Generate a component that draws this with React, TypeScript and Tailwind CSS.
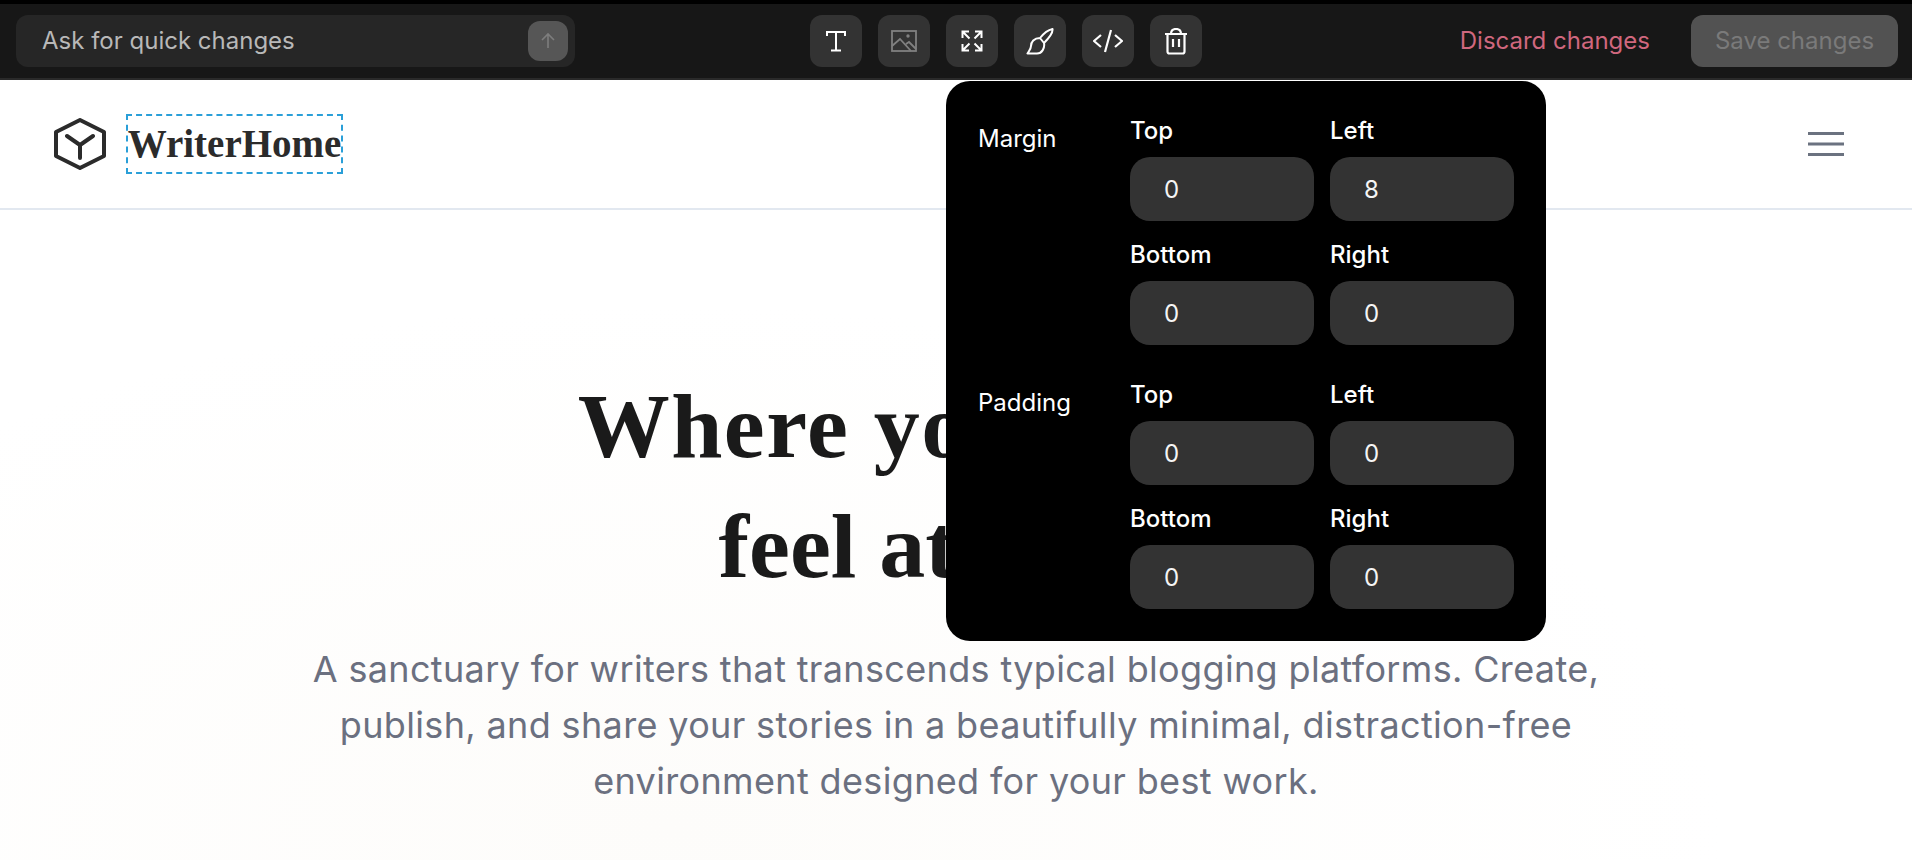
const inter = { fontFamily: "Inter, sans-serif" };

function IconBtn({ children }: { children: React.ReactNode }) {
  return <button className="w-[52px] h-[52px] rounded-[12px] bg-[#333333] flex items-center justify-center text-white">{children}</button>;
}

function Field({ label, value }: { label: string; value: string }) {
  return (
    <div className="w-[184px] flex flex-col">
      <div className="text-[24px] leading-[34px] font-medium text-white h-[32px]">{label}</div>
      <div className="mt-[11px] h-[64px] rounded-[20px] bg-[#333333] pl-[34px] pt-[2px] flex items-center text-[24px] text-[#f5f5f5]">{value}</div>
    </div>
  );
}

function Group({ label, values, className }: { label: string; values: string[]; className: string }) {
  return (
    <div className={"flex " + className}>
      <div className="w-[152px] text-[24px] leading-[32px] text-white pt-[9px]">{label}</div>
      <div className="grid grid-cols-[184px_184px] gap-x-[16px] gap-y-[17px]">
        <Field label="Top" value={values[0]} />
        <Field label="Left" value={values[1]} />
        <Field label="Bottom" value={values[2]} />
        <Field label="Right" value={values[3]} />
      </div>
    </div>
  );
}

export default function App() {
  return (
    <div className="relative w-[1912px] h-[860px] overflow-hidden bg-white" style={inter}>
      <div className="h-[4px] bg-black" />
      <div className="h-[76px] bg-[#171717] border-b-2 border-[#2a2a2a] flex items-start pt-[11px] pl-[16px] pr-[14px]">
        <div className="w-[559px] h-[52px] rounded-[12px] bg-[#262626] flex items-center pl-[26px] pr-[7px] justify-between">
          <span className="text-[24px] text-[#b8b8b8]">Ask for quick changes</span>
          <span className="w-[40px] h-[40px] rounded-[12px] bg-[#565656] flex items-center justify-center">
            <svg width="20" height="20" viewBox="0 0 20 20" fill="none" stroke="#7d7d7d" strokeWidth="1.6"><path d="M10 17V3M4 9l6-6 6 6" /></svg>
          </span>
        </div>
        <div className="ml-[235px] flex gap-[16px]">
          <IconBtn>
            <svg width="22" height="22" viewBox="0 0 22 22" fill="none" stroke="currentColor" strokeWidth="2"><path d="M2 6V2h18v4M11 2v19M6 20.500h10" /></svg>
          </IconBtn>
          <IconBtn>
            <svg width="26" height="22" viewBox="0 0 26 22" fill="none" stroke="#808080" strokeWidth="1.8"><rect x="1" y="1" width="24" height="20" /><path d="M1 16l8-7 11 12M15 14l3-2 7 7" /><circle cx="17" cy="6" r="0.800" fill="#808080" /></svg>
          </IconBtn>
          <IconBtn>
            <svg width="24" height="24" viewBox="0 0 24 24" fill="none" stroke="currentColor" strokeWidth="2"><path d="M2.500 9V2.500H9M2.500 2.500l7 7M15 2.500h6.500V9M21.500 2.500l-7 7M2.500 15v6.500H9M2.500 21.500l7-7M21.500 15v6.500H15M21.500 21.500l-7-7" /></svg>
          </IconBtn>
          <IconBtn>
            <svg width="28" height="27" viewBox="0 0 28 27" fill="none" stroke="currentColor" strokeWidth="2" strokeLinejoin="round"><path d="M14 10C18 5 22 2 26.500 1C27 4 24 9 18 15ZM14 10C8 10 5 14 5 18C5 21 3 23 1.500 25.500H11C16 25.500 19 20 18 15" /></svg>
          </IconBtn>
          <IconBtn>
            <svg width="30" height="24" viewBox="0 0 30 24" fill="none" stroke="currentColor" strokeWidth="2.200"><path d="M8 6l-7 6 7 6M22 6l7 6-7 6M18 1l-6 22" /></svg>
          </IconBtn>
          <IconBtn>
            <svg width="24" height="27" viewBox="0 0 24 27" fill="none" stroke="currentColor" strokeWidth="2.200"><path d="M1 6h22M7 6c0-3 2-5 5-5s5 2 5 5M3.500 6v17.500a2 2 0 0 0 2 2h13a2 2 0 0 0 2-2V6M9 11v8M15 11v8" /></svg>
          </IconBtn>
        </div>
        <div className="ml-auto flex items-center gap-[41px]">
          <span className="text-[24px] text-[#d0677e] leading-[52px]">Discard changes</span>
          <button className="w-[207px] h-[52px] rounded-[12px] bg-[#525252] text-[24px] text-[#7a7a7a]">Save changes</button>
        </div>
      </div>

      <nav className="h-[130px] border-b-2 border-[#e2e8f0] flex items-center justify-between pl-[54px] pr-[68px]">
        <div className="flex items-center">
          <svg width="52" height="52" viewBox="0 0 52 52" fill="none" stroke="#2b2b2b" strokeWidth="4" strokeLinejoin="round" strokeLinecap="round"><path d="M26 2L50 14V38L26 50L2 38V14ZM13 18L26 27L39 18M26 27V40" /></svg>
          <div className="ml-[20px] w-[217px] h-[60px] border-2 border-dashed border-[#2a9fd8] flex items-center justify-center text-[39px] font-bold text-[#2b2b2b] whitespace-nowrap" style={{ fontFamily: '"Liberation Serif", serif' }}>WriterHome</div>
        </div>
        <svg width="36" height="24" viewBox="0 0 36 24" fill="none" stroke="#6b7280" strokeWidth="3"><path d="M0 1.500h36M0 12h36M0 22.500h36" /></svg>
      </nav>

      <section className="h-[650px] bg-[radial-gradient(ellipse_at_35%_95%,#fdfcfa_0%,#ffffff_60%)] flex flex-col items-center pt-[156px]">
        <h1 className="text-[92px] leading-[120px] font-bold text-[#1a1a1a] text-center" style={{ fontFamily: '"Liberation Serif", serif' }}>
          <span className="tracking-[1.5px]">Where your words</span><br />feel at home
        </h1>
        <p className="mt-[35px] w-[1320px] text-[36px] leading-[56px] tracking-[0.35px] text-[#6b7080] text-center">
          A sanctuary for writers that transcends typical blogging platforms. Create, publish, and share your stories in a beautifully minimal, distraction-free environment designed for your best work.
        </p>
      </section>

      <div className="absolute left-[946px] top-[81px] w-[600px] h-[560px] rounded-[24px] bg-black pl-[32px] pt-[33px]">
        <Group label="Margin" values={["0", "8", "0", "0"]} className="" />
        <Group label="Padding" values={["0", "0", "0", "0"]} className="mt-[33px]" />
      </div>
    </div>
  );
}
